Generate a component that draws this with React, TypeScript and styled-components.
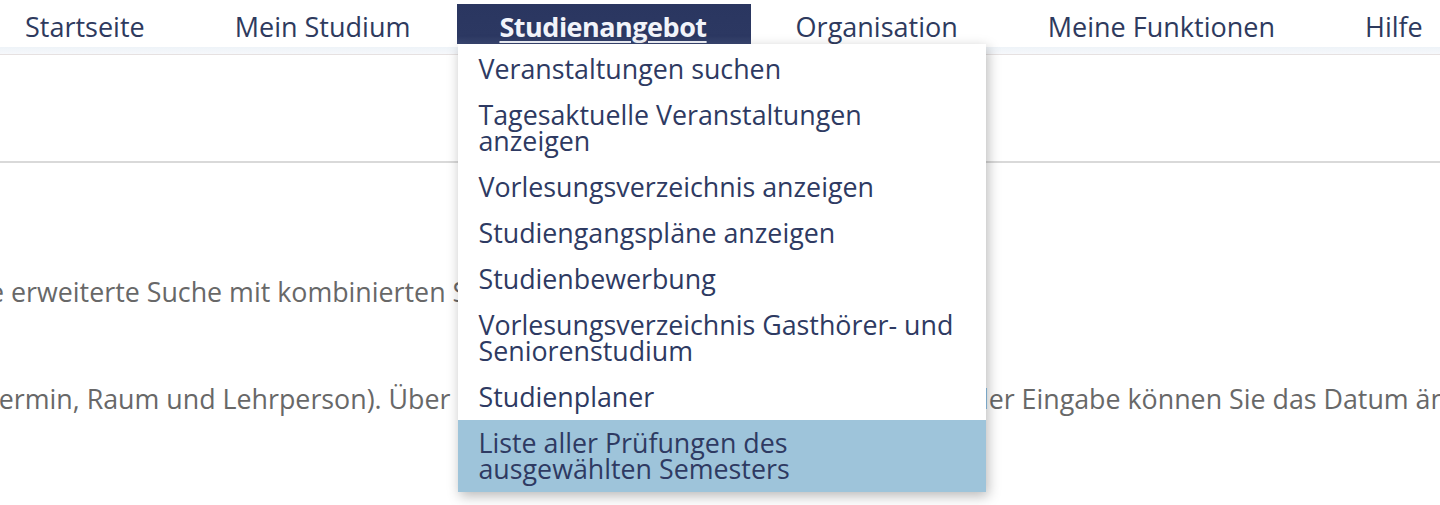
import React from "react";
import styled, { createGlobalStyle } from "styled-components";

const GlobalStyle = createGlobalStyle`
  html, body {
    margin: 0;
    padding: 0;
    background: #ffffff;
    overflow: hidden;
  }
  body {
    font-family: "Open Sans", "Noto Sans", "DejaVu Sans", sans-serif;
  }
  * { box-sizing: border-box; }
`;

const Page = styled.div`
  width: 1440px;
  height: 505px;
  overflow: hidden;
  background: #ffffff;
`;

const Header = styled.header`
  position: relative;
  z-index: 5;
  background: #ffffff;
`;

const NavList = styled.ul`
  display: flex;
  list-style: none;
  margin: 0 0 0 -20px;
  padding: 4px 0 0 0;
  height: 44px;
`;

const NavItem = styled.li<{ $active?: boolean }>`
  position: relative;
  display: flex;
  align-items: flex-start;
  height: 40px;
  margin-left: ${(p) => (p.$active ? "2px" : "0")};
  padding-top: 7px;
  padding-left: ${(p) => (p.$active ? "42px" : "45px")};
  padding-right: ${(p) => (p.$active ? "44px" : "45px")};
  font-size: 27px;
  line-height: 32px;
  color: ${(p) => (p.$active ? "#f2f4fa" : "#2e3a5e")};
  font-weight: ${(p) => (p.$active ? 700 : 400)};
  letter-spacing: ${(p) => (p.$active ? "-0.5px" : "0")};
  background: ${(p) =>
    p.$active
      ? "linear-gradient(to bottom, #2a3660 0%, #2c3862 80%, #3a4772 100%)"
      : "transparent"};
  white-space: nowrap;
  cursor: pointer;
`;

const NavLabel = styled.span<{ $active?: boolean }>`
  text-decoration: ${(p) => (p.$active ? "underline" : "none")};
  text-decoration-thickness: 2px;
  text-underline-offset: 4px;
`;

const Band = styled.div`
  margin-top: 3px;
  height: 8px;
  background: linear-gradient(to bottom, #eef3f8, #f6f8fb);
  border-bottom: 1px solid #e6e1e1;
`;

const TitleArea = styled.section`
  height: 108px;
  border-bottom: 2px solid #d9d9d9;
`;

const Content = styled.main`
  padding-top: 111px;
`;

const Para = styled.p<{ $shift: number; $gap: number }>`
  margin: 0 0 ${(p) => p.$gap}px ${(p) => p.$shift}px;
  font-size: 26.8px;
  line-height: 36px;
  color: #686868;
  white-space: nowrap;
`;

const Menu = styled.ul`
  position: absolute;
  top: 100%;
  left: 1px;
  width: 528px;
  margin: 0;
  padding: 2px 0 0 0;
  list-style: none;
  background: #ffffff;
  box-shadow: 2px 4px 12px rgba(0, 0, 0, 0.28);
  z-index: 10;
  letter-spacing: 0;
`;

const MenuItem = styled.li<{ $hover?: boolean }>`
  padding: 10px 22px 10px 20px;
  font-size: 26.8px;
  font-weight: 400;
  line-height: 26px;
  color: #2e3a62;
  white-space: normal;
  background: ${(p) => (p.$hover ? "#9ec4da" : "transparent")};
  cursor: pointer;
`;

const navItems = [
  "Startseite",
  "Mein Studium",
  "Studienangebot",
  "Organisation",
  "Meine Funktionen",
  "Hilfe",
];

const menuItems = [
  "Veranstaltungen suchen",
  "Tagesaktuelle Veranstaltungen anzeigen",
  "Vorlesungsverzeichnis anzeigen",
  "Studiengangspläne anzeigen",
  "Studienbewerbung",
  "Vorlesungsverzeichnis Gasthörer- und Seniorenstudium",
  "Studienplaner",
  "Liste aller Prüfungen des ausgewählten Semesters",
];

export default function App() {
  return (
    <Page>
      <GlobalStyle />
      <Header>
        <NavList>
          {navItems.map((label) => {
            const active = label === "Studienangebot";
            return (
              <NavItem key={label} $active={active}>
                <NavLabel $active={active}>{label}</NavLabel>
                {active && (
                  <Menu>
                    {menuItems.map((m, i) => (
                      <MenuItem key={m} $hover={i === menuItems.length - 1}>
                        {m}
                      </MenuItem>
                    ))}
                  </Menu>
                )}
              </NavItem>
            );
          })}
        </NavList>
        <Band />
      </Header>
      <TitleArea />
      <Content>
        <Para $shift={-11} $gap={71}>
          e erweiterte Suche mit kombinierten Suchkriterien.
        </Para>
        <Para $shift={-16} $gap={0}>
          Termin, Raum und Lehrperson). Über die Kalenderfunktionen rechts unterhalb der Eingabe können Sie das Datum ändern.
        </Para>
      </Content>
    </Page>
  );
}
